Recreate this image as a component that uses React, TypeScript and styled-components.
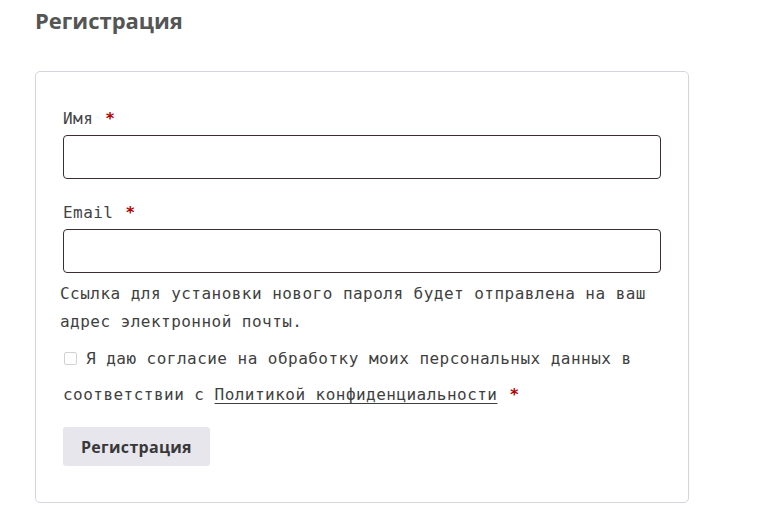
import React from 'react';
import styled, { createGlobalStyle } from 'styled-components';

const GlobalStyle = createGlobalStyle`
  html, body {
    margin: 0;
    padding: 0;
    background: #ffffff;
  }
  body {
    font-family: "DejaVu Sans Mono", "Liberation Mono", monospace;
    color: #3a3a3a;
  }
`;

const App: React.FC = () => {
  return (
    <>
      <GlobalStyle />
      <Page>
        <Heading>Регистрация</Heading>
        <Card>
          <Field>
            <Label>
              Имя <Required>*</Required>
            </Label>
            <Input type="text" />
          </Field>
          <Field>
            <Label>
              Email <Required>*</Required>
            </Label>
            <Input type="email" />
          </Field>
          <Note>
            Ссылка для установки нового пароля будет отправлена на ваш адрес электронной почты.
          </Note>
          <Consent>
            <Checkbox type="checkbox" />
            Я даю согласие на обработку моих персональных данных в соответствии с{' '}
            <PolicyLink href="#">Политикой конфиденциальности</PolicyLink>
            <Required>*</Required>
          </Consent>
          <SubmitButton type="button">Регистрация</SubmitButton>
        </Card>
      </Page>
    </>
  );
};

const Page = styled.div`
  padding: 6px 0 0 35px;
  width: 654px;
`;

const Heading = styled.h2`
  margin: 0 0 37px 0;
  font-family: "Open Sans", "Noto Sans", sans-serif;
  font-size: 22px;
  line-height: 28px;
  font-weight: 700;
  color: #555555;
`;

const Card = styled.div`
  border: 1px solid #d6d5df;
  border-radius: 5px;
  padding: 33px 27px 36px 27px;
`;

const Field = styled.div`
  margin-bottom: 20px;
`;

const Label = styled.label`
  display: block;
  font-size: 16px;
  line-height: 28px;
  letter-spacing: 0.45px;
  color: #444444;
  margin-bottom: 2px;
`;

const Required = styled.span`
  color: #b30000;
  font-weight: 700;
  margin-left: 2px;
`;

const Input = styled.input`
  display: block;
  box-sizing: border-box;
  width: 100%;
  height: 44px;
  border: 1px solid #3d2c31;
  border-radius: 4px;
  padding: 0 12px;
  font: inherit;
  outline: none;
  background: #ffffff;
`;

const Note = styled.p`
  margin: -13px 0 5px -3px;
  font-size: 16px;
  line-height: 28px;
  letter-spacing: 0.47px;
  color: #3f3f3f;
`;

const Consent = styled.label`
  display: block;
  font-size: 16px;
  line-height: 36px;
  letter-spacing: 0.47px;
  color: #3f3f3f;
`;

const Checkbox = styled.input`
  appearance: none;
  width: 13px;
  height: 13px;
  margin: 0 9px 0 1px;
  border: 1px solid #d2d2d2;
  border-radius: 2px;
  vertical-align: -1px;
  background: #ffffff;
`;

const PolicyLink = styled.a`
  color: #3f3f3f;
  text-decoration: underline;
  text-underline-offset: 3px;
  margin-right: 10px;
`;

const SubmitButton = styled.button`
  margin-top: 14px;
  height: 39px;
  padding: 0 18px;
  border: none;
  border-radius: 3px;
  background: #e7e6ed;
  font-family: "Open Sans", "Noto Sans", sans-serif;
  font-size: 16px;
  letter-spacing: 0.3px;
  font-weight: 700;
  color: #383838;
  cursor: pointer;
`;

export default App;
